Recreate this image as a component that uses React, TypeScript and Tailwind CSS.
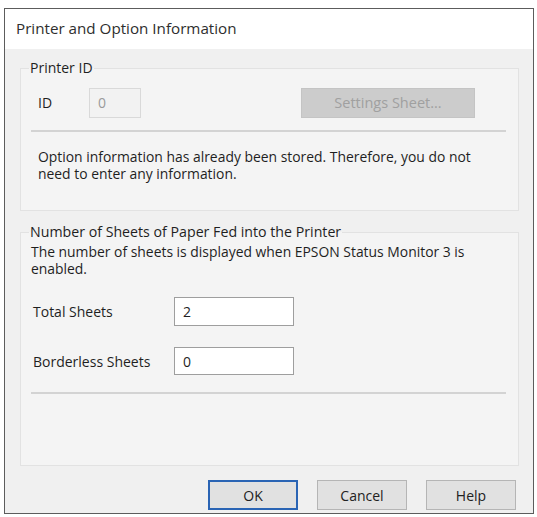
import React from "react";

const font = { fontFamily: '"Open Sans", "Noto Sans", "Liberation Sans", sans-serif' };

export default function App() {
  return (
    <div
      className="w-[537px] h-[517px] bg-white pt-[8px] pl-[4px] pr-[3px] pb-[3px] text-[#1f1f1f]"
      style={font}
    >
      <div className="w-[530px] h-[506px] border border-[#5c5c5c] bg-[#f0f0f0] flex flex-col">
        <div className="h-[40px] bg-white flex items-center pl-[11px] text-[15.2px] text-[#2e2e2e] pb-[2px]">
          Printer and Option Information
        </div>
        <div className="flex-1 flex flex-col pl-[15px] pr-[14px] pt-[11px]">
          <fieldset className="border border-[#e2e2e2] bg-[#f4f4f4] h-[151px] px-0 flex flex-col">
            <legend className="ml-[8px] px-[1px] text-[14px] leading-[16px]">Printer ID</legend>
            <div className="flex items-center h-[31px] mt-[11px] pl-[17px] pr-[43px]">
              <span className="text-[14px] w-[51px]">ID</span>
              <div className="w-[52px] h-[30px] border border-[#d9d9d9] bg-[#f2f2f2] flex items-center pl-[8px] text-[14px] text-[#9a9a9a]">
                0
              </div>
              <div className="flex-1" />
              <div className="w-[174px] h-[30px] bg-[#cccccc] border border-[#c4c4c4] flex items-center justify-center text-[14.5px] text-[#a0a0a0]">
                Settings Sheet...
              </div>
            </div>
            <div className="mt-[12px] ml-[10px] mr-[12px] h-[2px] bg-[#d3d3d3]" />
            <div className="mt-[16px] pl-[17px] text-[13.9px] leading-[17px]">
              <div>Option information has already been stored. Therefore, you do not</div>
              <div>need to enter any information.</div>
            </div>
          </fieldset>

          <fieldset className="mt-[13px] border border-[#e2e2e2] bg-[#f4f4f4] h-[242px] px-0 flex flex-col">
            <legend className="ml-[8px] px-[1px] text-[14.2px] leading-[16px]">
              Number of Sheets of Paper Fed into the Printer
            </legend>
            <div className="mt-[3px] pl-[10px] text-[13.9px] leading-[17px]">
              <div>The number of sheets is displayed when EPSON Status Monitor 3 is</div>
              <div>enabled.</div>
            </div>
            <div className="flex items-center mt-[20px] pl-[12px]">
              <span className="text-[14px] w-[141px]">Total Sheets</span>
              <div className="w-[120px] h-[29px] border border-[#9e9e9e] bg-white flex items-center pl-[8px] text-[14px]">
                2
              </div>
            </div>
            <div className="flex items-center mt-[21px] pl-[12px]">
              <span className="text-[14px] w-[141px]">Borderless Sheets</span>
              <div className="w-[120px] h-[28px] border border-[#9e9e9e] bg-white flex items-center pl-[8px] text-[14px]">
                0
              </div>
            </div>
            <div className="mt-[17px] ml-[10px] mr-[12px] h-[2px] bg-[#d3d3d3]" />
          </fieldset>

          <div className="mt-[14px] flex justify-end gap-[19px] pr-[3px]">
            <button className="w-[90px] h-[30px] border-2 border-[#2a64b4] bg-[#e1e1e1] text-[14px] text-[#222] flex items-center justify-center">
              OK
            </button>
            <button className="w-[90px] h-[30px] border border-[#b5b5b5] bg-[#e1e1e1] text-[14px] text-[#222] flex items-center justify-center">
              Cancel
            </button>
            <button className="w-[90px] h-[30px] border border-[#b5b5b5] bg-[#e1e1e1] text-[14px] text-[#222] flex items-center justify-center">
              Help
            </button>
          </div>
        </div>
      </div>
    </div>
  );
}
